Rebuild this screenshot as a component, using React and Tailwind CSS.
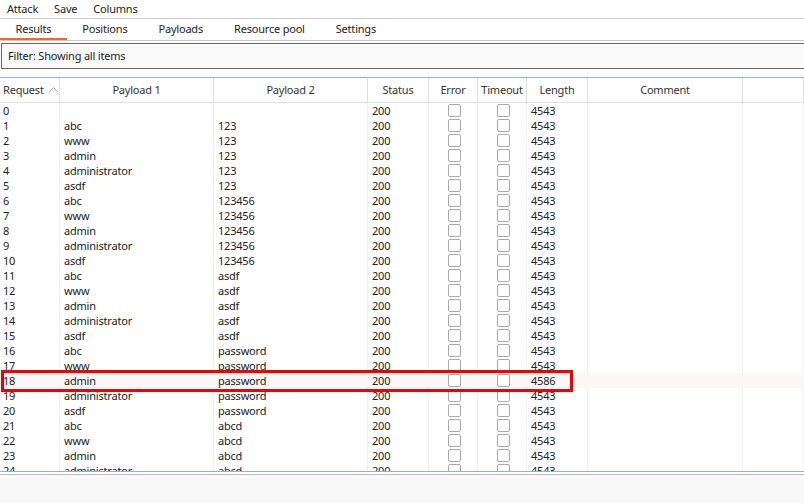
import React from "react";

const cols = [
  { name: "Request", w: 60, align: "left" },
  { name: "Payload 1", w: 154 },
  { name: "Payload 2", w: 154 },
  { name: "Status", w: 61 },
  { name: "Error", w: 49 },
  { name: "Timeout", w: 49 },
  { name: "Length", w: 61 },
  { name: "Comment", w: 155 },
  { name: "", w: 61 },
];

const p1 = ["abc", "www", "admin", "administrator", "asdf"];
const p2 = ["123", "123456", "asdf", "password", "abcd"];

const rows = Array.from({ length: 25 }, (_, i) => ({
  id: i,
  a: i === 0 ? "" : p1[(i - 1) % 5],
  b: i === 0 ? "" : p2[Math.floor((i - 1) / 5)],
  len: i === 18 ? "4586" : "4543",
}));

function Check() {
  return <div className="w-[13px] h-[13px] rounded-[2px] border border-[#a8a8a8] bg-white" />;
}

export default function App() {
  return (
    <div
      className="w-[804px] h-[503px] flex flex-col bg-white text-[11px] tracking-[-0.2px] text-[#222] overflow-hidden"
      style={{ fontFamily: '"Noto Sans", "DejaVu Sans", sans-serif' }}
    >
      {/* menu */}
      <div className="h-[19px] flex items-center border-b border-[#d0d0d0] shrink-0">
        <span className="ml-[7px]">Attack</span>
        <span className="ml-[16px]">Save</span>
        <span className="ml-[16px]">Columns</span>
      </div>
      {/* tabs */}
      <div className="h-[22px] flex border-b border-[#c8c8c8] shrink-0">
        {["Results", "Positions", "Payloads", "Resource pool", "Settings"].map((t, i) => (
          <div
            key={t}
            className={
              "h-full flex items-center px-[15.5px] " +
              (i === 0 ? "border-b-2 border-[#f0682c] pt-[1px]" : "pt-[1px] pb-[2px]")
            }
          >
            {t}
          </div>
        ))}
      </div>
      {/* filter */}
      <div className="mt-[2px] ml-[1px] h-[26px] shrink-0 flex items-center border border-r-0 border-[#666] bg-[#fafafa] pl-[6px]">
        Filter: Showing all items
      </div>
      {/* table */}
      <div className="mt-[8px] h-[395px] shrink-0 border-t border-b border-[#90b2d4] relative overflow-hidden flex flex-col">
        <div className="h-[25px] flex border-b border-[#e2e2e2] shrink-0 text-[#333]">
          {cols.map((c, i) => (
            <div
              key={i}
              style={{ width: c.w }}
              className={
                "h-full flex items-center shrink-0 border-r border-[#e0e0e0] " +
                (c.align === "left" ? "pl-[3px] gap-[4px]" : "justify-center")
              }
            >
              {c.name}
              {i === 0 && (
                <svg width="11" height="7" viewBox="0 0 11 7" className="mt-[-1px]">
                  <polyline points="1,6 5.5,1.5 10,6" fill="none" stroke="#aaa" strokeWidth="1" />
                </svg>
              )}
            </div>
          ))}
        </div>
        <div className="relative flex-1">
          <div className="absolute inset-0 flex pointer-events-none">
            {cols.map((c, i) => (
              <div key={i} style={{ width: c.w }} className="h-full shrink-0 border-r border-[#f0f0f0]" />
            ))}
          </div>
          <div className="relative">
            {rows.map((r) => (
              <div key={r.id} className={"h-[15px] flex items-center leading-[15px] " + (r.id === 18 ? "bg-[#fcf7f7]" : "")}>
                <div className="w-[60px] shrink-0 pl-[3px]">{r.id}</div>
                <div className="w-[154px] shrink-0 pl-[4px]">{r.a}</div>
                <div className="w-[154px] shrink-0 pl-[4px]">{r.b}</div>
                <div className="w-[61px] shrink-0 pl-[4px]">200</div>
                <div className="w-[49px] shrink-0 flex justify-center pl-[1px]"><Check /></div>
                <div className="w-[49px] shrink-0 flex justify-center pl-[1px]"><Check /></div>
                <div className="w-[61px] shrink-0 pl-[4px]">{r.len}</div>
              </div>
            ))}
          </div>
          <div className="absolute left-[1px] top-[267px] w-[572px] h-[22px] border-[3px] border-[#ee0000]" />
        </div>
      </div>
      <div className="mt-[2px] flex-1 border-t border-[#bdbdbd] bg-[#f8f8f8]" />
    </div>
  );
}
